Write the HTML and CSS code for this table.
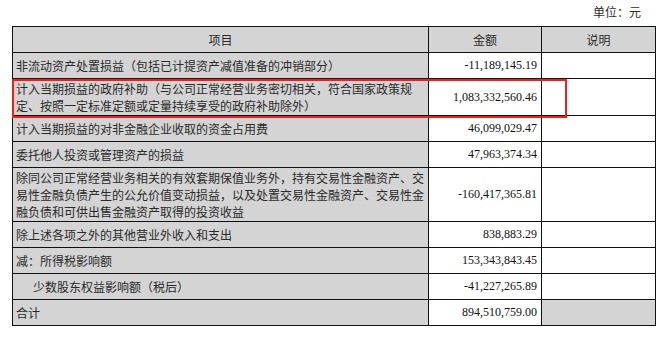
FILE: index.html
```html
<!DOCTYPE html>
<html lang="zh">
<head>
<meta charset="utf-8">
<link rel="stylesheet" href="styles.css">
</head>
<body>
<div class="page">
  <div class="unit">单位：元</div>
  <table class="tbl">
    <colgroup>
      <col class="c1"><col class="c2"><col class="c3">
    </colgroup>
    <tr class="head">
      <td>项目</td><td>金额</td><td>说明</td>
    </tr>
    <tr>
      <td class="item">非流动资产处置损益（包括已计提资产减值准备的冲销部分）</td>
      <td class="num">-11,189,145.19</td><td class="note"></td>
    </tr>
    <tr>
      <td class="item multi">计入当期损益的政府补助（与公司正常经营业务密切相关，符合国家政策规<br>定、按照一定标准定额或定量持续享受的政府补助除外）</td>
      <td class="num">1,083,332,560.46</td><td class="note"></td>
    </tr>
    <tr>
      <td class="item">计入当期损益的对非金融企业收取的资金占用费</td>
      <td class="num">46,099,029.47</td><td class="note"></td>
    </tr>
    <tr>
      <td class="item">委托他人投资或管理资产的损益</td>
      <td class="num">47,963,374.34</td><td class="note"></td>
    </tr>
    <tr>
      <td class="item multi">除同公司正常经营业务相关的有效套期保值业务外，持有交易性金融资产、交<br>易性金融负债产生的公允价值变动损益，以及处置交易性金融资产、交易性金<br>融负债和可供出售金融资产取得的投资收益</td>
      <td class="num">-160,417,365.81</td><td class="note"></td>
    </tr>
    <tr>
      <td class="item">除上述各项之外的其他营业外收入和支出</td>
      <td class="num">838,883.29</td><td class="note"></td>
    </tr>
    <tr>
      <td class="item">减：所得税影响额</td>
      <td class="num">153,343,843.45</td><td class="note"></td>
    </tr>
    <tr>
      <td class="item indent">少数股东权益影响额（税后）</td>
      <td class="num">-41,227,265.89</td><td class="note"></td>
    </tr>
    <tr>
      <td class="item">合计</td>
      <td class="num">894,510,759.00</td><td class="note shaded"></td>
    </tr>
  </table>
  <div class="highlight"></div>
</div>
</body>
</html>
```
FILE: styles.css
```css
html, body {
  margin: 0;
  padding: 0;
  background: #fff;
}
.page {
  position: relative;
  width: 666px;
  height: 342px;
  font-family: "Noto Sans CJK SC", "Noto Sans", sans-serif;
  font-size: 12px;
  color: #2a2a2a;
}
.unit {
  height: 26px;
  line-height: 24px;
  text-align: right;
  padding-right: 25px;
  box-sizing: border-box;
}
.tbl {
  margin-left: 12px;
  border-collapse: collapse;
  table-layout: fixed;
  width: 643px;
}
.c1 { width: 416px; }
.c2 { width: 113px; }
.c3 { width: 114px; }
.tbl td {
  border: 1px solid #111;
  height: 26px;
  padding: 1px 3px;
  line-height: 17px;
  vertical-align: middle;
  box-sizing: border-box;
}
.head td {
  background: #d4d4d4;
  text-align: center;
}
.item {
  background: #d4d4d4;
  white-space: nowrap;
}
.indent {
  padding-left: 20px !important;
}
.num {
  font-family: "Liberation Serif", serif;
  font-size: 12px;
  text-align: right;
  padding-right: 4px !important;
  color: #111;
}
.note { background: #fff; }
.note.shaded { background: #d4d4d4; }
.highlight {
  position: absolute;
  left: 12px;
  top: 79px;
  width: 555px;
  height: 39px;
  border: 2px solid #f21d1d;
  box-sizing: border-box;
  pointer-events: none;
}
```
